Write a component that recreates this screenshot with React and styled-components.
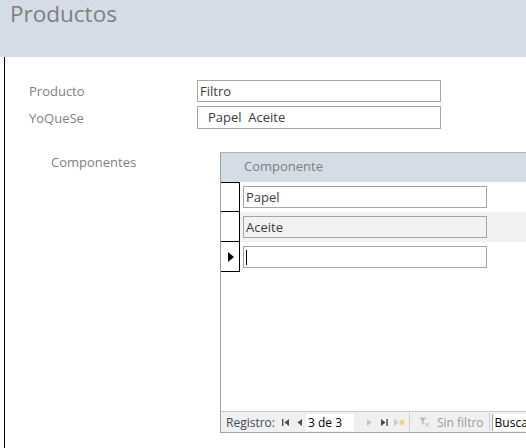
import React from "react";
import styled, { createGlobalStyle } from "styled-components";

const Global = createGlobalStyle`
  html, body {
    margin: 0;
    padding: 0;
    background: #ffffff;
  }
  body {
    width: 526px;
    height: 448px;
    overflow: hidden;
    font-family: "Open Sans", "Noto Sans", sans-serif;
  }
`;

const Page = styled.div`
  width: 526px;
  height: 448px;
  display: flex;
  flex-direction: column;
  overflow: hidden;
`;

const Header = styled.div`
  height: 57px;
  flex: none;
  background: #d6dce5;
  padding: 0 0 0 10px;
  box-sizing: border-box;
`;

const Title = styled.h1`
  margin: -1px 0 0;
  font-weight: 400;
  font-size: 22.5px;
  line-height: 30px;
  color: #7f7f7f;
`;

const Detail = styled.div`
  flex: 1;
  margin-left: 4px;
  border-left: 1px solid #000;
  padding: 23px 0 0 24px;
  display: flex;
  flex-direction: column;
  min-height: 0;
`;

const FieldRow = styled.div`
  display: flex;
  align-items: center;
  margin-bottom: ${(p) => p.$gap || 0}px;
`;

const Label = styled.div`
  width: ${(p) => p.$w}px;
  padding-left: ${(p) => p.$indent || 0}px;
  box-sizing: border-box;
  font-size: 13px;
  color: #7f7f7f;
  flex: none;
`;

const TopLabel = styled(Label)`
  align-self: flex-start;
  margin-top: 1px;
`;

const TextBox = styled.div`
  width: 244px;
  height: ${(p) => p.$h || 22}px;
  box-sizing: border-box;
  border: 1px solid #a6a6a6;
  background: ${(p) => p.$bg || "#fff"};
  padding-left: ${(p) => p.$pad || 2}px;
  font-size: 13px;
  line-height: 20px;
  color: #3c3c3c;
  white-space: pre;
  flex: none;
`;

const SubRow = styled.div`
  display: flex;
  align-items: flex-start;
  margin-top: 23px;
  flex: 1;
  min-height: 0;
`;

const SubForm = styled.div`
  width: 340px;
  height: 281px;
  flex: none;
  box-sizing: border-box;
  border-left: 1px solid #a0a0a0;
  border-top: 1px solid #b4b4b4;
  display: flex;
  flex-direction: column;
`;

const SubHeader = styled.div`
  height: 29px;
  background: #d6dce5;
  padding-left: 23px;
  font-size: 13px;
  line-height: 27px;
  color: #7f7f7f;
`;

const RowList = styled.div`
  flex: 1;
  display: flex;
  flex-direction: column;
`;

const DataRow = styled.div`
  display: flex;
  height: 30px;
  background: ${(p) => (p.$alt ? "#f2f2f2" : "#fff")};
`;

const Selector = styled.div`
  width: 19px;
  flex: none;
  box-sizing: border-box;
  border-right: 1px solid #000;
  border-bottom: 1px solid #000;
  border-top: ${(p) => (p.$first ? "1px solid #000" : "none")};
  background: #fff;
  display: flex;
  align-items: center;
  padding-left: 7px;
`;

const Cell = styled.div`
  padding: 4px 0 0 3px;
`;

const Caret = styled.span`
  display: inline-block;
  width: 1px;
  height: 15px;
  background: #000;
  margin-top: 3px;
`;

const NavBar = styled.div`
  height: 20px;
  flex: none;
  background: #f0f0f0;
  border-top: 1px solid #c8c8c8;
  border-bottom: 1px solid #a6a6a6;
  display: flex;
  align-items: center;
  padding-left: 5px;
  font-size: 12px;
  white-space: nowrap;
`;

const NavLabel = styled.span`
  flex: none;
  margin: 0 ${(p) => (p.$dim ? 3 : 4)}px 0 ${(p) => (p.$dim ? 7 : 0)}px;
  color: ${(p) => (p.$dim ? "#9a9a9a" : "#404a5a")};
`;

const NavButton = styled.span`
  display: inline-flex;
  align-items: center;
  justify-content: center;
  width: ${(p) => p.$w || 15}px;
  height: 18px;
  flex: none;
`;

const Counter = styled.div`
  width: 48px;
  height: 17px;
  flex: none;
  background: #fff;
  font-size: 12px;
  line-height: 17px;
  color: #000;
  padding-left: 2px;
  box-sizing: border-box;
  margin-right: 8px;
`;

const Sep = styled.span`
  width: 1px;
  height: 18px;
  flex: none;
  background: #d0d0d0;
  margin: 0 ${(p) => p.$after || 6}px 0 ${(p) => p.$before || 2}px;
`;

const Search = styled.div`
  height: 17px;
  width: 60px;
  flex: none;
  background: #fff;
  border-left: 1px solid #a6a6a6;
  font-size: 12px;
  line-height: 17px;
  padding-left: 2px;
  color: #000;
`;

const First = () => (
  <svg width="8" height="9" viewBox="0 0 8 9">
    <rect x="0" y="1" width="1.4" height="7" fill="#4a4a4a" />
    <path d="M7 1 L2.5 4.5 L7 8 Z" fill="#4a4a4a" />
  </svg>
);
const Prev = () => (
  <svg width="6" height="9" viewBox="0 0 6 9">
    <path d="M5 1 L0.5 4.5 L5 8 Z" fill="#4a4a4a" />
  </svg>
);
const Next = () => (
  <svg width="6" height="9" viewBox="0 0 6 9">
    <path d="M1 1 L5.5 4.5 L1 8 Z" fill="#c4c4c4" />
  </svg>
);
const Last = () => (
  <svg width="8" height="9" viewBox="0 0 8 9">
    <path d="M1 1 L5.5 4.5 L1 8 Z" fill="#4a4a4a" />
    <rect x="6.4" y="1" width="1.4" height="7" fill="#4a4a4a" />
  </svg>
);
const New = () => (
  <svg width="12" height="9" viewBox="0 0 12 9">
    <path d="M1 1 L5.5 4.5 L1 8 Z" fill="#c8c8c8" />
    <rect x="6.5" y="2" width="5" height="5" fill="#f3e3a0" />
    <path d="M9 1.5 V7.5 M6.5 4.5 H11.5" stroke="#e7cc6a" strokeWidth="1" />
  </svg>
);
const FilterIcon = () => (
  <svg width="11" height="10" viewBox="0 0 11 10">
    <path d="M0.5 0.5 H7 L4.5 4 V8 L3 7 V4 Z" fill="#b8b8b8" />
    <path d="M6.5 6 L10 9.5 M10 6 L6.5 9.5" stroke="#b8b8b8" strokeWidth="1" />
  </svg>
);
const Arrow = () => (
  <svg width="6" height="10" viewBox="0 0 6 10">
    <path d="M0 0 L6 5 L0 10 Z" fill="#000" />
  </svg>
);

export default function App() {
  const rows = [
    { value: "Papel" },
    { value: "Aceite", alt: true },
    { value: null, current: true },
  ];
  return (
    <Page>
      <Global />
      <Header>
        <Title>Productos</Title>
      </Header>
      <Detail>
        <FieldRow $gap={4}>
          <Label $w={168}>Producto</Label>
          <TextBox>Filtro</TextBox>
        </FieldRow>
        <FieldRow>
          <Label $w={168}>YoQueSe</Label>
          <TextBox $pad={10} $h={23}>
            {"Papel  Aceite"}
          </TextBox>
        </FieldRow>
        <SubRow>
          <TopLabel $w={191} $indent={22}>
            Componentes
          </TopLabel>
          <SubForm>
            <SubHeader>Componente</SubHeader>
            <RowList>
              {rows.map((r, i) => (
                <DataRow key={i} $alt={r.alt}>
                  <Selector $first={i === 0}>{r.current && <Arrow />}</Selector>
                  <Cell>
                    <TextBox $bg={r.alt ? "#f2f2f2" : "#fff"}>
                      {r.value !== null ? r.value : <Caret />}
                    </TextBox>
                  </Cell>
                </DataRow>
              ))}
            </RowList>
            <NavBar>
              <NavLabel>Registro:</NavLabel>
              <NavButton $w={15}>
                <First />
              </NavButton>
              <NavButton $w={12}>
                <Prev />
              </NavButton>
              <Counter>3 de 3</Counter>
              <NavButton>
                <Next />
              </NavButton>
              <NavButton>
                <Last />
              </NavButton>
              <NavButton>
                <New />
              </NavButton>
              <Sep $before={2} $after={9} />
              <NavButton $w={11}>
                <FilterIcon />
              </NavButton>
              <NavLabel $dim>Sin filtro</NavLabel>
              <Sep $before={2} $after={2} />
              <Search>Buscar</Search>
            </NavBar>
          </SubForm>
        </SubRow>
      </Detail>
    </Page>
  );
}
